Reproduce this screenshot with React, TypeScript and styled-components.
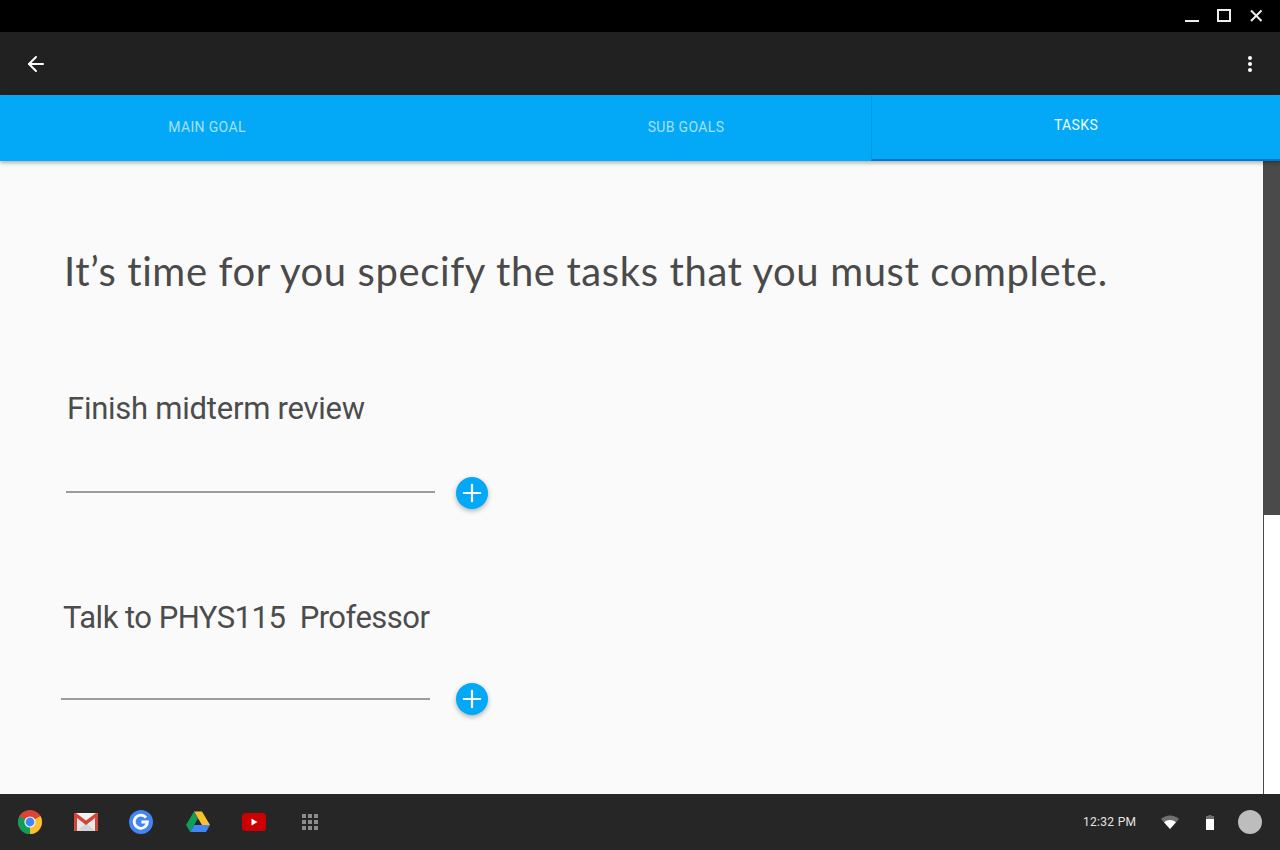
import React from "react";
import styled, { createGlobalStyle } from "styled-components";
import { ArrowLeft, Plus } from "lucide-react";

const Global = createGlobalStyle`
  html, body { margin: 0; padding: 0; overflow: hidden; background: #fafafa; }
  * { box-sizing: border-box; }
`;

const Screen = styled.div`
  width: 1280px;
  height: 850px;
  display: flex;
  flex-direction: column;
  font-family: Roboto, "Liberation Sans", sans-serif;
`;

const TitleBar = styled.div`
  height: 32px;
  background: #000;
  display: flex;
  justify-content: flex-end;
  align-items: stretch;
  padding-right: 8px;
`;

const WindowButton = styled.div`
  width: 32px;
  display: flex;
  align-items: center;
  justify-content: center;
`;

const Toolbar = styled.div`
  height: 63px;
  background: #212121;
  display: flex;
  align-items: center;
  justify-content: space-between;
  padding: 0 18px 0 24px;
`;

const Tabs = styled.div`
  height: 66px;
  background: #03a9f7;
  display: flex;
  position: relative;
  z-index: 2;
  box-shadow: 0 2px 4px rgba(0, 0, 0, 0.3);
`;

const Tab = styled.div<{ $active?: boolean; $width?: number; $gap?: number }>`
  ${(p) => (p.$width ? `width: ${p.$width}px;` : "flex: 1;")}
  margin-left: ${(p) => p.$gap ?? 0}px;
  display: flex;
  align-items: center;
  justify-content: center;
  font-size: 14px;
  letter-spacing: 0.35px;
  color: ${(p) => (p.$active ? "#f2fbff" : "#a5e0fb")};
  padding-bottom: ${(p) => (p.$active ? 5 : 3)}px;
  ${(p) =>
    p.$active
      ? "border-left: 1px solid #0399e0; border-bottom: 2px solid #0277c8;"
      : ""}
`;

const Body = styled.div`
  flex: 1;
  display: flex;
  min-height: 0;
`;

const Content = styled.main`
  flex: 1;
  background: #fafafa;
  padding: 83px 0 0;
  overflow: hidden;
`;

const Heading = styled.h1`
  margin: 0 0 0 64px;
  font-family: Lato, "Open Sans", sans-serif;
  font-weight: 400;
  font-size: 40px;
  line-height: 54px;
  letter-spacing: 0.61px;
  color: #4a4a4a;
  white-space: nowrap;
`;

const Goal = styled.section<{ $indent: number; $top: number }>`
  margin-top: ${(p) => p.$top}px;
  margin-left: ${(p) => p.$indent}px;
  width: ${(p) => 488 - p.$indent}px;
`;

const GoalTitle = styled.h2<{ $pad: number; $tracking: number }>`
  margin: 0 0 0 ${(p) => p.$pad}px;
  font-weight: 400;
  font-size: 31px;
  line-height: 40px;
  letter-spacing: ${(p) => p.$tracking}px;
  color: #4c4c4c;
  white-space: pre;
`;

const InputRow = styled.div<{ $top: number }>`
  margin-top: ${(p) => p.$top}px;
  display: flex;
  align-items: center;
  justify-content: space-between;
  height: 32px;
`;

const InputLine = styled.div<{ $lift: number }>`
  width: 369px;
  height: 2px;
  margin-top: ${(p) => -p.$lift}px;
  background: #9c9c9c;
`;

const AddButton = styled.div`
  width: 32px;
  height: 32px;
  border-radius: 50%;
  background: #03a9f7;
  color: #fff;
  display: flex;
  align-items: center;
  justify-content: center;
  box-shadow: 0 2px 5px rgba(0, 0, 0, 0.3);
`;

const ScrollTrack = styled.div`
  width: 17px;
  background: #fff;
  border-left: 1px solid #4a4a4a;
`;

const ScrollThumb = styled.div`
  height: 354px;
  margin-left: -1px;
  background: #4a4a4a;
`;

const Shelf = styled.footer`
  height: 56px;
  background: #262626;
  display: flex;
  align-items: center;
  justify-content: space-between;
  padding: 0 18px 0 2px;
`;

const Launcher = styled.div`
  display: flex;
  align-items: center;
`;

const ShelfItem = styled.div`
  width: 56px;
  height: 56px;
  display: flex;
  align-items: center;
  justify-content: center;
`;

const Status = styled.div`
  display: flex;
  align-items: center;
`;

const Clock = styled.span`
  font-size: 12px;
  letter-spacing: 0.3px;
  color: #e4e4e4;
  width: 53px;
  margin-right: 25px;
  white-space: nowrap;
`;

const StatusIcon = styled.div<{ $left: number }>`
  margin-left: ${(p) => p.$left}px;
  display: flex;
`;

const Avatar = styled.div`
  width: 24px;
  height: 24px;
  border-radius: 50%;
  background: #bdbdbd;
  margin-left: 24px;
`;

const GoogleSvg = styled.svg`
  margin-right: 2px;
`;

const Chrome = () => (
  <svg width="26" height="26" viewBox="0 0 26 26">
    <circle cx="13" cy="13" r="12" fill="#db4437" />
    <path d="M13 13 L23.4 7 A12 12 0 0 1 13 25 Z" fill="#fbc02d" />
    <path d="M13 13 L13 25 A12 12 0 0 1 2.6 7 Z" fill="#0f9d58" />
    <path d="M13 13 L2.6 7 A12 12 0 0 1 6 3.3 Z" fill="#db4437" />
    <circle cx="13" cy="13" r="5.6" fill="#f5f5f5" />
    <circle cx="13" cy="13" r="4.4" fill="#4285f4" />
  </svg>
);

const Gmail = () => (
  <svg width="24" height="18" viewBox="0 0 24 18">
    <rect width="24" height="18" rx="1" fill="#e8e8e8" />
    <path d="M3 18 L12 10 L21 18 Z" fill="#d4d4d4" />
    <path d="M0 2 L12 11 L24 2 L24 0 L0 0 Z" fill="#f2f2f2" />
    <path d="M1 0 H0 Q0 0 0 1 V17 Q0 18 1 18 H3 V5 L12 12 L21 5 V18 H23 Q24 18 24 17 V1 Q24 0 23 0 H22 L12 7.5 L2 0 Z" fill="#d0463b" />
  </svg>
);

const GoogleMark = () => (
  <GoogleSvg width="24" height="24" viewBox="0 0 24 24">
    <circle cx="12" cy="12" r="12" fill="#4285f4" />
    <path d="M17 7.6 A6.6 6.6 0 1 0 18.4 12 H12.4" fill="none" stroke="#fff" strokeWidth="2.8" />
  </GoogleSvg>
);

const Drive = () => (
  <svg width="24" height="22" viewBox="0 0 24 22">
    <path d="M8 0.5 H16 L24 14 H16 Z" fill="#fbc02d" />
    <path d="M8 0.5 L12 7.3 L4.2 21 L0 14 Z" fill="#0f9d58" />
    <path d="M8.2 14 H24 L20 21 H4.2 Z" fill="#4285f4" />
  </svg>
);

const YouTube = () => (
  <svg width="24" height="18" viewBox="0 0 24 18">
    <rect width="24" height="18" rx="3.5" fill="#cc0000" />
    <path d="M9.5 5.5 L15.5 9 L9.5 12.5 Z" fill="#fff" />
  </svg>
);

const AppsGrid = () => (
  <svg width="16" height="16" viewBox="0 0 16 16" fill="#8c8c8c">
    {[0, 6, 12].map((y) =>
      [0, 6, 12].map((x) => <rect key={`${x}-${y}`} x={x} y={y} width="4" height="4" />)
    )}
  </svg>
);

const Wifi = () => (
  <svg width="18" height="14" viewBox="0 0 18 14">
    <path d="M0 4 A13 13 0 0 1 18 4 L9 14 Z" fill="#6f6f6f" />
    <path d="M3 7.2 A9 9 0 0 1 15 7.2 L9 14 Z" fill="#fff" />
  </svg>
);

const Battery = () => (
  <svg width="8" height="15" viewBox="0 0 8 15">
    <path d="M2.5 0 H5.5 V1 H8 V15 H0 V1 H2.5 Z" fill="#6f6f6f" />
    <rect y="4" width="8" height="11" fill="#fff" />
  </svg>
);

const goals = [
  { title: "Finish midterm review", indent: 66, pad: 1, top: 91, rowTop: 48, tracking: -0.25, lift: 2 },
  { title: "Talk to PHYS115\u00a0\u00a0Professor", indent: 61, pad: 2, top: 89, rowTop: 45, tracking: -0.52, lift: 1 },
];

export default function App() {
  return (
    <Screen>
      <Global />
      <TitleBar>
        <WindowButton>
          <svg width="14" height="14" viewBox="0 0 14 14">
            <rect y="11" width="14" height="2" fill="#eee" />
          </svg>
        </WindowButton>
        <WindowButton>
          <svg width="14" height="14" viewBox="0 0 14 14">
            <rect x="1" y="1" width="12" height="11" fill="none" stroke="#eee" strokeWidth="2" />
          </svg>
        </WindowButton>
        <WindowButton>
          <svg width="14" height="14" viewBox="0 0 14 14">
            <path d="M2 1.5 L12.5 12 M12.5 1.5 L2 12" stroke="#eee" strokeWidth="2" />
          </svg>
        </WindowButton>
      </TitleBar>
      <Toolbar>
        <ArrowLeft size={24} color="#fff" strokeWidth={2} />
        <svg width="24" height="24" viewBox="0 0 24 24" fill="#fff">
          <circle cx="12" cy="6" r="2" />
          <circle cx="12" cy="12" r="2" />
          <circle cx="12" cy="18" r="2" />
        </svg>
      </Toolbar>
      <Tabs>
        <Tab $width={414}>MAIN GOAL</Tab>
        <Tab $width={370} $gap={87}>SUB GOALS</Tab>
        <Tab $active>TASKS</Tab>
      </Tabs>
      <Body>
        <Content>
          <Heading>It’s time for you specify the tasks that you must complete.</Heading>
          {goals.map((g) => (
            <Goal key={g.title} $indent={g.indent} $top={g.top}>
              <GoalTitle $pad={g.pad} $tracking={g.tracking}>{g.title}</GoalTitle>
              <InputRow $top={g.rowTop}>
                <InputLine $lift={g.lift} />
                <AddButton>
                  <Plus size={28} strokeWidth={1.9} />
                </AddButton>
              </InputRow>
            </Goal>
          ))}
        </Content>
        <ScrollTrack>
          <ScrollThumb />
        </ScrollTrack>
      </Body>
      <Shelf>
        <Launcher>
          <ShelfItem><Chrome /></ShelfItem>
          <ShelfItem><Gmail /></ShelfItem>
          <ShelfItem><GoogleMark /></ShelfItem>
          <ShelfItem><Drive /></ShelfItem>
          <ShelfItem><YouTube /></ShelfItem>
          <ShelfItem><AppsGrid /></ShelfItem>
        </Launcher>
        <Status>
          <Clock>12:32 PM</Clock>
          <StatusIcon $left={0}><Wifi /></StatusIcon>
          <StatusIcon $left={27}><Battery /></StatusIcon>
          <Avatar />
        </Status>
      </Shelf>
    </Screen>
  );
}
